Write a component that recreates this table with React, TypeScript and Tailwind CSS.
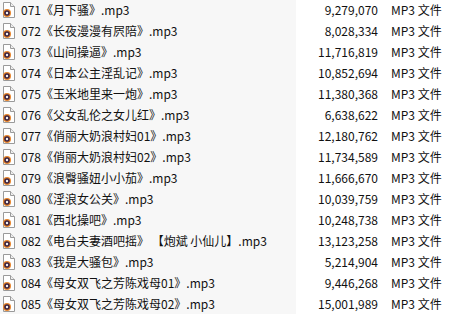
const files: { name: string; size: string }[] = [
  { name: "071《月下骚》.mp3", size: "9,279,070" },
  { name: "072《长夜漫漫有屄陪》.mp3", size: "8,028,334" },
  { name: "073《山间操逼》.mp3", size: "11,716,819" },
  { name: "074《日本公主淫乱记》.mp3", size: "10,852,694" },
  { name: "075《玉米地里来一炮》.mp3", size: "11,380,368" },
  { name: "076《父女乱伦之女儿红》.mp3", size: "6,638,622" },
  { name: "077《俏丽大奶浪村妇01》.mp3", size: "12,180,762" },
  { name: "078《俏丽大奶浪村妇02》.mp3", size: "11,734,589" },
  { name: "079《浪臀骚妞小小茄》.mp3", size: "11,666,670" },
  { name: "080《淫浪女公关》.mp3", size: "10,039,759" },
  { name: "081《西北操吧》.mp3", size: "10,248,738" },
  { name: "082《电台夫妻酒吧摇》 【炮斌 小仙儿】.mp3", size: "13,123,258" },
  { name: "083《我是大骚包》.mp3", size: "5,214,904" },
  { name: "084《母女双飞之芳陈戏母01》.mp3", size: "9,446,268" },
  { name: "085《母女双飞之芳陈戏母02》.mp3", size: "15,001,989" },
];

function Mp3Icon() {
  return (
    <svg width="16" height="16" viewBox="0 0 16 16" className="shrink-0">
      <path d="M2.5 0.5h7l4 4v11h-11z" fill="#fff" stroke="#9a9a9a" />
      <path d="M9.5 0.5v4h4" fill="#eee" stroke="#9a9a9a" />
      <circle cx="6" cy="11" r="4" fill="#e8852b" />
      <circle cx="6" cy="11" r="2.8" fill="#3b2240" />
      <circle cx="6" cy="11" r="1.2" fill="#f2f2f2" />
    </svg>
  );
}

export default function App() {
  return (
    <div
      className="w-[459px] h-[319px] overflow-hidden bg-white text-[12px] text-[#111]"
      style={{ fontFamily: '"Microsoft YaHei", "Noto Sans CJK SC", sans-serif' }}
    >
      <div className="mt-[-1px]">
        {files.map((f) => (
          <div key={f.name} className="flex h-[21px] items-center">
            <div className="flex h-full w-[296px] items-center gap-[4px] bg-[#f7f7f7] pl-[1px]">
              <Mp3Icon />
              <span className="whitespace-pre">{f.name}</span>
            </div>
            <div className="w-[82px] text-right">{f.size}</div>
            <div className="pl-[13px] whitespace-nowrap">MP3 文件</div>
          </div>
        ))}
      </div>
    </div>
  );
}
